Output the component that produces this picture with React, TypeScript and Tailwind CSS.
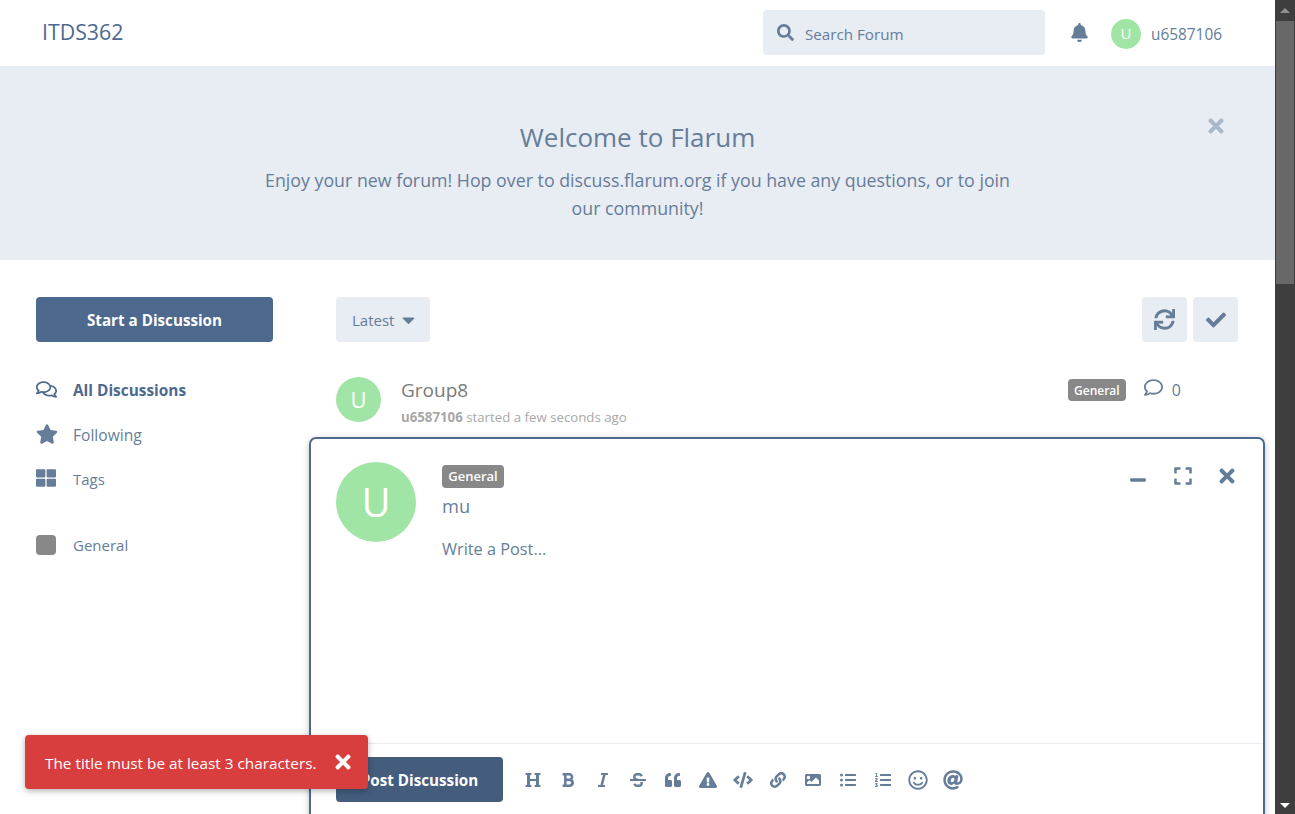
import {
  FaAt, FaBell, FaBold, FaCaretDown, FaCheck, FaCode, FaExclamationTriangle, FaExpand, FaHeading, FaImage,
  FaItalic, FaLink, FaListOl, FaListUl, FaMinus, FaQuoteLeft, FaRegComment, FaRegComments, FaRegSmile,
  FaSearch, FaStar, FaStrikethrough, FaSync, FaThLarge, FaTimes,
} from 'react-icons/fa'

const toolbar = [
  FaHeading, FaBold, FaItalic, FaStrikethrough, FaQuoteLeft, FaExclamationTriangle, FaCode, FaLink, FaImage,
  FaListUl, FaListOl, FaRegSmile, FaAt,
]

export default function App() {
  return (
    <div className="flex h-[814px] w-[1295px] overflow-hidden bg-white font-['Open_Sans',sans-serif] text-[#667d99]">
      <div className="relative h-full w-[1275px] overflow-hidden">
        {/* Header */}
        <header className="flex h-[66px] items-center pb-[1px] pl-[42px] pr-[53px]">
          <div className="-mt-[2px] text-[21.3px] leading-none text-[#4d698e]">ITDS362</div>
          <div className="ml-auto flex h-[45px] w-[282px] items-center rounded bg-[#e8ecf3] pl-[14px] text-[15.2px]">
            <FaSearch className="h-[17px] w-[17px]" />
            <span className="ml-[11px] pt-[3px]">Search Forum</span>
          </div>
          <FaBell className="ml-[25px] h-[19px] w-[19px]" />
          <div className="ml-[22px] mt-[2px] flex h-[30px] w-[30px] items-center justify-center rounded-full bg-[#a0e5a6] text-[15px] text-white">U</div>
          <span className="ml-[10px] mt-[5px] text-[15.4px]">u6587106</span>
        </header>

        {/* Welcome hero */}
        <section className="relative flex h-[194px] flex-col items-center bg-[#e8ecf3] pt-[53px] text-center">
          <h1 className="text-[26px] leading-[36px]">Welcome to Flarum</h1>
          <p className="mt-[11px] w-[760px] text-[17.8px] leading-[28px]">
            Enjoy your new forum! Hop over to discuss.flarum.org if you have any questions, or to join our community!
          </p>
          <FaTimes className="absolute left-[1208px] top-[49px] h-[22px] w-[16px] text-[#aab6c9]" />
        </section>

        <div className="flex pl-[36px] pr-[37px] pt-[37px]">
          {/* Sidebar */}
          <aside className="w-[237px] shrink-0">
            <div className="flex h-[45px] items-center justify-center rounded bg-[#4d698e] pt-[1px] text-[15.2px] font-bold text-white">Start a Discussion</div>
            <nav className="mt-[26px] text-[15px]">
              <div className="flex h-[44px] items-center font-bold text-[#4d698e]">
                <FaRegComments className="h-[21px] w-[21px] -translate-y-[1px]" />
                <span className="ml-[16px] pt-[2px] text-[15.4px]">All Discussions</span>
              </div>
              <div className="flex h-[45px] items-center">
                <FaStar className="h-[22px] w-[22px] -translate-y-[1px]" />
                <span className="ml-[15px] pt-[2px] text-[15.6px]">Following</span>
              </div>
              <div className="flex h-[44px] items-center">
                <FaThLarge className="h-[20px] w-[20px] -translate-y-[1px]" />
                <span className="ml-[17px]">Tags</span>
              </div>
              <div className="mt-[22px] flex h-[44px] items-center">
                <div className="h-[20px] w-[20px] rounded bg-[#888888]" />
                <span className="ml-[17px]">General</span>
              </div>
            </nav>
          </aside>

          {/* Discussion list */}
          <main className="ml-[63px] flex-1">
            <div className="flex items-start justify-between">
              <div className="flex h-[45px] items-center rounded bg-[#e8ecf3] pl-[16px] pr-[15px] pt-[1px] text-[15px]">
                Latest
                <FaCaretDown className="ml-[8px] h-[20px] w-[13px]" />
              </div>
              <div className="flex gap-[6px]">
                <div className="flex h-[45px] w-[45px] items-center justify-center rounded bg-[#e8ecf3]"><FaSync className="h-[21px] w-[21px]" /></div>
                <div className="flex h-[45px] w-[45px] items-center justify-center rounded bg-[#e8ecf3]"><FaCheck className="h-[20px] w-[20px]" /></div>
              </div>
            </div>
            <div className="mt-[35px] flex items-start">
              <div className="flex h-[45px] w-[45px] shrink-0 items-center justify-center rounded-full bg-[#a0e5a6] text-[22px] text-white">U</div>
              <div className="ml-[20px] -mt-[1px]">
                <div className="text-[19px] leading-[28px] text-[#7a7a7a]">Group8</div>
                <div className="mt-[4px] text-[13.25px] leading-[18px] text-[#a8a8a8]"><b className="font-bold">u6587106</b> started a few seconds ago</div>
              </div>
              <span className="ml-auto mt-[2px] flex h-[22px] w-[58px] items-center justify-center rounded bg-[#888888] pt-[2px] text-[12px] font-semibold text-white">General</span>
              <FaRegComment className="ml-[18px] mt-[1px] h-[19px] w-[19px]" />
              <span className="ml-[9px] mr-[57px] mt-[1px] text-[16px] leading-[24px]">0</span>
            </div>
          </main>
        </div>

        {/* Composer */}
        <div className="absolute left-[309px] top-[437px] h-[420px] w-[956px] rounded-[7px] border-2 border-[#4d698e] bg-white shadow-[0_2px_6px_rgba(0,0,0,0.25)]">
          <div className="flex h-[304px] pl-[25px] pt-[23px]">
            <div className="flex h-[80px] w-[80px] shrink-0 items-center justify-center rounded-full bg-[#a0e5a6] text-[40px] text-white">U</div>
            <div className="ml-[26px]">
              <span className="mt-[3px] flex h-[23px] w-[62px] items-center justify-center rounded bg-[#888888] text-[13px] font-semibold text-white">General</span>
              <div className="mt-[5px] text-[18.3px] leading-[26px]">mu</div>
              <div className="mt-[18px] text-[16.3px] leading-[24px]">Write a Post...</div>
            </div>
            <div className="ml-auto mr-[28px] flex h-[28px] items-center gap-[26px]">
              <FaMinus className="mt-[8px] h-[18px] w-[18px]" />
              <FaExpand className="h-[20px] w-[20px]" />
              <FaTimes className="h-[22px] w-[16px]" />
            </div>
          </div>
          <div className="flex items-center border-t border-[#e8ecf3] pl-[25px] pt-[13px]">
            <div className="flex h-[45px] w-[167px] items-center justify-center rounded bg-[#445d7d] pt-[2px] text-[15.2px] font-bold text-white">Post Discussion</div>
            <div className="ml-[12px] flex items-center pt-[1px]">
              {toolbar.map((Icon, i) => (
                <div key={i} className="flex h-[20px] w-[35px] items-center justify-center">
                  <Icon className={i > 10 ? 'h-[20px] w-[20px]' : 'h-[16px] w-[24px]'} />
                </div>
              ))}
            </div>
          </div>
        </div>

        {/* Alert */}
        <div className="absolute left-[25px] top-[735px] flex h-[54px] w-[343px] items-center rounded bg-[#d83e3e] pl-[20px] text-[15.34px] text-white shadow-[0_2px_6px_rgba(0,0,0,0.3)]">
          <span className="pt-[3px]">The title must be at least 3 characters.</span>
          <FaTimes className="ml-[18px] h-[22px] w-[16px]" />
        </div>
      </div>

      {/* Scrollbar */}
      <div className="flex h-full w-[20px] shrink-0 flex-col items-center bg-[#3e3e3e]">
        <div className="flex h-[21px] items-center justify-center">
          <div className="h-0 w-0 border-x-[5px] border-b-[5px] border-x-transparent border-b-[#8f8f8f]" />
        </div>
        <div className="h-[263px] w-[18px] bg-[#686868]" />
        <div className="mb-[6px] mt-auto h-0 w-0 border-x-[5px] border-t-[5px] border-x-transparent border-t-white" />
      </div>
    </div>
  )
}
